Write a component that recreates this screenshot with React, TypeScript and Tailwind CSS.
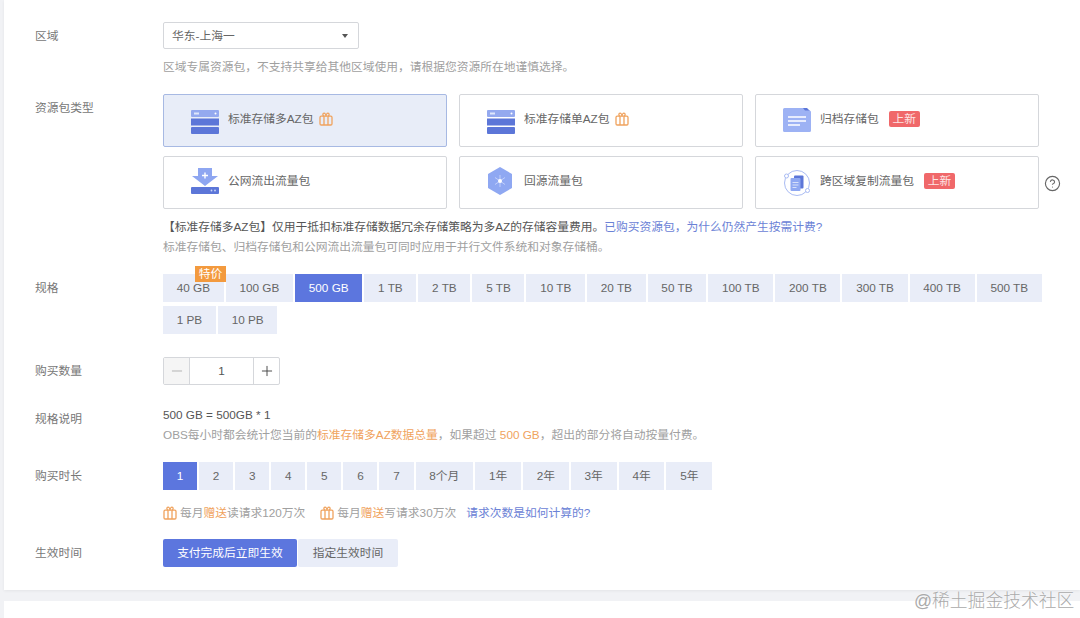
import { CircleHelp, Minus, Plus } from "lucide-react";

const SIZES = ["40 GB", "100 GB", "500 GB", "1 TB", "2 TB", "5 TB", "10 TB", "20 TB", "50 TB", "100 TB", "200 TB", "300 TB", "400 TB", "500 TB", "1 PB", "10 PB"];
const DURATIONS = ["1", "2", "3", "4", "5", "6", "7", "8个月", "1年", "2年", "3年", "4年", "5年"];

function GiftIcon({ className = "" }: { className?: string }) {
  return (
    <svg viewBox="0 0 14 14" className={`h-[14px] w-[14px] shrink-0 ${className}`} fill="none" stroke="#f0a35e" strokeWidth="1.3">
      <rect x="1" y="4.2" width="12" height="8.8" rx="1.2" />
      <path d="M5 4.2V13M9 4.2V13" />
      <path d="M5 4.2C3.4 3.4 3.6 1.2 5 1.2 6.2 1.2 7 3 7 4.2 7 3 7.8 1.2 9 1.2 10.4 1.2 10.6 3.4 9 4.2" />
    </svg>
  );
}

function StorageIcon() {
  return (
    <svg viewBox="0 0 28 24" className="mt-[2px] h-6 w-7 shrink-0">
      <rect x="0" y="0" width="28" height="7" rx="1" fill="#94a9ef" />
      <path d="M3 2.500h5v2H3z" fill="#dfe6fb" />
      <circle cx="24.500" cy="3.500" r="1" fill="#fff" />
      <rect x="0" y="8.500" width="28" height="7" fill="#5c76d8" />
      <rect x="0" y="17" width="28" height="7" rx="1" fill="#5c76d8" />
    </svg>
  );
}

function DownloadIcon() {
  return (
    <svg viewBox="0 0 28 26" className="-mt-[3px] h-[26px] w-7 shrink-0">
      <path d="M7 0h14v8h6L14 18 1 8h6z" fill="#8ea6f1" />
      <path d="M14 4.500v6M11 7.500h6" stroke="#fff" strokeWidth="1.4" />
      <rect x="0" y="19" width="28" height="7" rx="1" fill="#5c76d8" />
      <circle cx="20.500" cy="22.500" r="0.9" fill="#c9d4f7" />
      <circle cx="24" cy="22.500" r="0.9" fill="#c9d4f7" />
    </svg>
  );
}

function HexIcon() {
  return (
    <svg viewBox="0 0 26 28" className="-mt-[3px] h-7 w-[26px] shrink-0">
      <path d="M13 0l12 7v14l-12 7-12-7V7z" fill="#8fa8f2" />
      <path d="M13 8v12M8 10.500l10 7M18 10.500l-10 7" stroke="#c7d4fa" strokeWidth="0.9" />
      <circle cx="13" cy="14" r="2" fill="#fff" />
    </svg>
  );
}

function FolderIcon() {
  return (
    <svg viewBox="0 0 28 25" className="-mt-[3px] h-[25px] w-7 shrink-0">
      <path d="M14 1h10l3 3v2H14z" fill="#5c76d8" />
      <path d="M1.500 1H20l2 2.500h4.500A1.500 1.500 0 0 1 28 5v18.500a1.500 1.500 0 0 1-1.500 1.500h-25A1.500 1.500 0 0 1 0 23.500V2.500A1.500 1.500 0 0 1 1.500 1z" fill="#9db2f4" />
      <path d="M5 10h18M5 14h18M5 18h12" stroke="#fff" strokeWidth="1.5" />
    </svg>
  );
}

function OrbitIcon() {
  return (
    <svg viewBox="0 0 28 28" className="h-7 w-7 shrink-0">
      <circle cx="14" cy="14" r="12.500" fill="none" stroke="#a9bbf3" strokeWidth="1" />
      <circle cx="3.500" cy="7" r="2" fill="#fff" stroke="#a9bbf3" />
      <circle cx="24.500" cy="21.500" r="2" fill="#fff" stroke="#a9bbf3" />
      <rect x="11" y="6.500" width="9.500" height="13" rx="1" fill="#5c76d8" />
      <rect x="7.500" y="9" width="10" height="13" rx="1" fill="#8fa8f2" />
      <path d="M9.500 13.500h6M9.500 16h6M9.500 18.500h4" stroke="#dfe6fb" strokeWidth="0.9" />
    </svg>
  );
}

function NewBadge() {
  return <span className="mb-[3px] ml-[10px] flex h-4 w-[31px] items-center justify-center rounded-[2px] bg-[#f0686a] text-[#fde4e4]">上新</span>;
}

function PackCard({ icon, label, selected, children }: { icon: React.ReactNode; label: string; selected?: boolean; children?: React.ReactNode }) {
  return (
    <div
      className={`flex h-[53px] w-[284px] items-center rounded-[2px] border pl-[27px] ${
        selected ? "border-[#a7b9e3] bg-[#e8edf8]" : "border-[#d5d7db] bg-white"
      }`}
    >
      <div className="flex w-[37px] shrink-0">{icon}</div>
      <span className="mb-1 text-[#666]">{label}</span>
      {children}
    </div>
  );
}

function Row({ label, className = "", children }: { label: string; className?: string; children: React.ReactNode }) {
  return (
    <div className={`flex ${className}`}>
      <div className="w-[159px] shrink-0 pl-[31px] leading-[27px] text-[#777]">{label}</div>
      <div className="min-w-0 flex-1">{children}</div>
    </div>
  );
}

function Option({ text, active, className = "px-[14px]" }: { text: string; active?: boolean; className?: string }) {
  return (
    <div className={`flex h-7 items-center ${className} ${active ? "bg-[#5c76de] text-white" : "bg-[#e9edf8] text-[#666]"}`}>{text}</div>
  );
}

export default function App() {
  return (
    <div className="relative h-[618px] w-[1080px] overflow-hidden bg-[#f1f2f5] pl-1 font-['Liberation_Sans','Noto_Sans_CJK_SC',sans-serif] text-[11.75px] text-[#666]">
      <div className="h-[590px] bg-white pt-[22px] shadow-[0_1px_3px_rgba(0,0,0,0.06)]">
        <Row label="区域">
          <div className="flex h-[27px] w-[196px] items-center justify-between rounded-[2px] border border-[#d5d7db] pl-2 pr-[10px] text-[#666]">
            <span>华东-上海一</span>
            <span className="h-0 w-0 border-x-[3.5px] border-t-4 border-x-transparent border-t-[#555]" />
          </div>
          <p className="mt-2 leading-5 text-[#a0a0a0]">区域专属资源包，不支持共享给其他区域使用，请根据您资源所在地谨慎选择。</p>
        </Row>

        <Row label="资源包类型" className="mt-[17px]">
          <div className="flex items-end gap-[5px]">
            <div className="grid w-[876px] shrink-0 grid-cols-[284px_284px_284px] gap-x-3 gap-y-[9px]">
              <PackCard icon={<StorageIcon />} label="标准存储多AZ包" selected>
                <GiftIcon className="mb-[3px] ml-[5px]" />
              </PackCard>
              <PackCard icon={<StorageIcon />} label="标准存储单AZ包">
                <GiftIcon className="mb-[3px] ml-[5px]" />
              </PackCard>
              <PackCard icon={<FolderIcon />} label="归档存储包">
                <NewBadge />
              </PackCard>
              <PackCard icon={<DownloadIcon />} label="公网流出流量包" />
              <PackCard icon={<HexIcon />} label="回源流量包" />
              <PackCard icon={<OrbitIcon />} label="跨区域复制流量包">
                <NewBadge />
              </PackCard>
            </div>
            <CircleHelp size={17} strokeWidth={1.6} className="mb-[17px] text-[#666]" />
          </div>
          <p className="mt-2 leading-5 text-[#555]">
            【标准存储多AZ包】仅用于抵扣标准存储数据冗余存储策略为多AZ的存储容量费用。<span className="text-[#6b82d6]">已购买资源包，为什么仍然产生按需计费?</span>
          </p>
          <p className="leading-5 text-[#a0a0a0]">标准存储包、归档存储包和公网流出流量包可同时应用于并行文件系统和对象存储桶。</p>
        </Row>

        <Row label="规格" className="mt-[17px]">
          <div className="relative flex w-[884px] flex-wrap gap-x-[2px] gap-y-1">
            {SIZES.map((s) => (
              <Option key={s} text={s} active={s === "500 GB"} className="px-[13.73px]" />
            ))}
            <span className="absolute left-[32px] top-[-8px] flex h-4 w-[31px] items-center justify-center bg-[#f39a3e] text-white">特价</span>
          </div>
        </Row>

        <Row label="购买数量" className="mt-[23px]">
          <div className="flex h-7 w-[117px] items-stretch rounded-[2px] border border-[#d5d7db]">
            <div className="flex w-[25px] items-center justify-center bg-[#f5f5f5] text-[#aaa]">
              <Minus size={16} strokeWidth={1.3} />
            </div>
            <div className="flex flex-1 items-center justify-center border-x border-[#d5d7db] text-[#555]">1</div>
            <div className="flex w-[25px] items-center justify-center text-[#444]">
              <Plus size={16} strokeWidth={1.4} />
            </div>
          </div>
        </Row>

        <Row label="规格说明" className="mt-[20px]">
          <p className="leading-5 text-[#555]">500 GB = 500GB * 1</p>
          <p className="leading-5 text-[#a0a0a0]">
            OBS每小时都会统计您当前的<span className="text-[#f0a35e]">标准存储多AZ数据总量</span>，如果超过 <span className="text-[#f0a35e]">500 GB</span>，超出的部分将自动按量付费。
          </p>
        </Row>

        <Row label="购买时长" className="mt-[17px]">
          <div className="flex gap-[2px]">
            {DURATIONS.map((d) => (
              <Option key={d} text={d} active={d === "1"} className="px-[13.78px]" />
            ))}
          </div>
          <div className="mt-[13px] flex h-5 items-center text-[#a0a0a0]">
            <GiftIcon />
            <span className="ml-[3px]">每月<span className="text-[#f0a35e]">赠送</span>读请求120万次</span>
            <GiftIcon className="ml-[15px]" />
            <span className="ml-[3px]">每月<span className="text-[#f0a35e]">赠送</span>写请求30万次</span>
            <span className="ml-[10px] text-[#6b82d6]">请求次数是如何计算的?</span>
          </div>
        </Row>

        <Row label="生效时间" className="mt-4">
          <div className="flex gap-px">
            <div className="flex h-7 w-[134px] items-center justify-center rounded-[2px] bg-[#5c76de] text-white">支付完成后立即生效</div>
            <div className="flex h-7 w-[100px] items-center justify-center rounded-[2px] bg-[#e9edf8] text-[#666]">指定生效时间</div>
          </div>
        </Row>
      </div>

      <div className="mt-[11px] h-5 bg-white" />

      <span className="absolute left-[914px] top-[589px] text-[17.8px] leading-[24px] font-light text-[#aaa] [text-shadow:0_0_2px_#fff]">@稀土掘金技术社区</span>
    </div>
  );
}
